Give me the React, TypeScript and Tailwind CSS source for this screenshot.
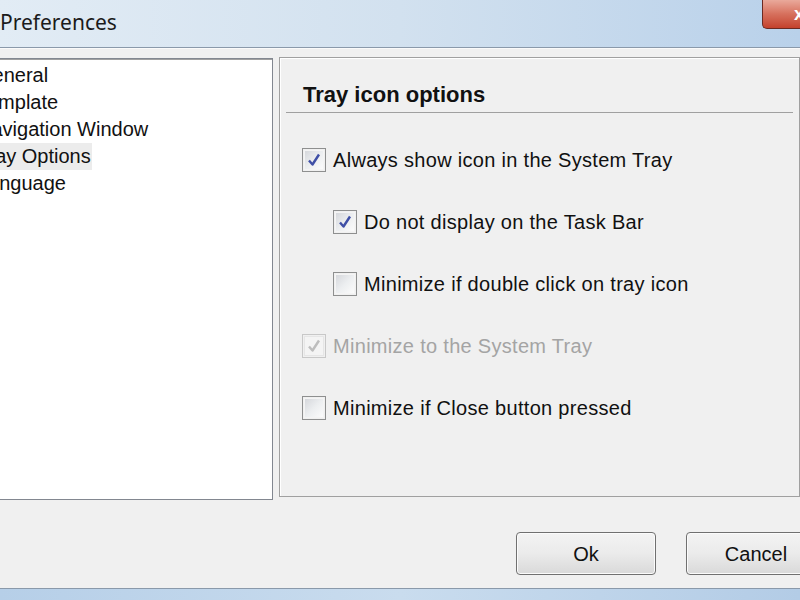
import type { ReactNode } from 'react';

const ui = { fontFamily: '"Liberation Sans", Arial, sans-serif' };

function Check({ checked, disabled }: { checked?: boolean; disabled?: boolean }) {
  return (
    <div
      className={`w-[24px] h-[24px] shrink-0 border flex items-center justify-center ${
        disabled ? 'border-[#c8c8c8]' : 'border-[#8e8f8f]'
      }`}
    >
      <div
        className={`w-[20px] h-[20px] border flex items-center justify-center ${
          disabled
            ? 'border-[#e6e6e6] bg-[#f4f4f4]'
            : 'border-[#f4f4f4] bg-gradient-to-br from-[#d6d8dc] via-[#eceef0] to-[#fbfbfb]'
        }`}
      >
        {checked && (
          <svg width="16" height="16" viewBox="0 0 16 16">
            <path
              d="M3 8.5 L6.5 12.5 L13 2.5"
              fill="none"
              stroke={disabled ? '#bdbdbd' : '#3f4fa6'}
              strokeWidth="2.4"
              strokeLinejoin="round"
            />
          </svg>
        )}
      </div>
    </div>
  );
}

function Option({ children, checked, disabled }: { children: ReactNode; checked?: boolean; disabled?: boolean }) {
  return (
    <div className="flex items-center gap-[7px] h-[24px]">
      <Check checked={checked} disabled={disabled} />
      <span
        className={`text-[20px] leading-none tracking-[0.3px] whitespace-nowrap ${
          disabled ? 'text-[#a4a4a4]' : 'text-[#111]'
        }`}
      >
        {children}
      </span>
    </div>
  );
}

function Button({ children }: { children: ReactNode }) {
  return (
    <button className="w-[140px] h-[43px] shrink-0 rounded-[4px] border border-[#707070] bg-gradient-to-b from-[#f3f3f3] via-[#ebebeb] to-[#d9d9d9] shadow-[inset_0_0_0_1px_#fbfbfb] text-[20px] text-[#111]">
      {children}
    </button>
  );
}

export default function App() {
  const tree = ['General', 'Template', 'Navigation Window', 'Tray Options', 'Language'];

  return (
    <div className="w-[800px] h-[600px] overflow-hidden flex flex-col bg-[#f0f0f0]" style={ui}>
      {/* title bar */}
      <div className="h-[48px] shrink-0 flex items-start justify-between border-b border-[#8a99aa] bg-gradient-to-r from-[#e2ecf5] via-[#d2e1ef] to-[#b9d1ea]">
        <div
          className="pl-[0px] pt-[7px] text-[21px] text-[#1b1b1b]"
          style={{ fontFamily: '"Noto Sans", "Open Sans", sans-serif' }}
        >
          Preferences
        </div>
        <div className="w-[38px] h-[29px] rounded-bl-[5px] border-l border-b border-[#6b2a22] bg-gradient-to-b from-[#e9a99b] via-[#d6705d] to-[#c4412c] flex items-center justify-end">
          <span className="text-white text-[18px] font-bold leading-none mr-[-4px]">x</span>
        </div>
      </div>

      <div className="flex-1 flex flex-col border-t border-[#fafafa]">
        {/* panels */}
        <div className="flex gap-[6px] pt-[9px] items-start">
          <div className="ml-[-2px] w-[275px] h-[442px] shrink-0 border border-[#828790] bg-white shadow-[inset_1px_1px_0_#a0a0a0] overflow-hidden">
            <div className="pt-[3px] ml-[-22px] flex flex-col items-start">
              {tree.map((t) => (
                <div
                  key={t}
                  className={`h-[27px] leading-[27px] text-[20px] text-[#111] whitespace-nowrap pr-[1px] ${
                    t === 'Tray Options' ? 'bg-[#ececec] mr-[-4px]' : ''
                  }`}
                >
                  {t}
                </div>
              ))}
            </div>
          </div>

          <div className="flex-1 h-[440px] border border-[#a0a0a0] shadow-[inset_1px_1px_0_#ffffff] bg-[#f0f0f0] mt-[-1px]">
            <div className="mx-[6px] h-[55px] border-b border-[#a0a0a0] flex items-center pl-[17px] pt-[18px]">
              <span className="text-[22px] font-bold text-[#111]">Tray icon options</span>
            </div>
            <div className="pt-[35px] pl-[22px] flex flex-col gap-[38px]">
              <Option checked>Always show icon in the System Tray</Option>
              <div className="pl-[31px]">
                <Option checked>Do not display on the Task Bar</Option>
              </div>
              <div className="pl-[31px]">
                <Option>Minimize if double click on tray icon</Option>
              </div>
              <Option checked disabled>
                Minimize to the System Tray
              </Option>
              <Option>Minimize if Close button pressed</Option>
            </div>
          </div>
        </div>

        {/* buttons */}
        <div className="flex gap-[30px] pl-[516px] pt-[32px]">
          <Button>Ok</Button>
          <Button>Cancel</Button>
        </div>
      </div>

      {/* bottom frame */}
      <div className="h-[12px] shrink-0 border-t border-[#8a99aa] bg-gradient-to-r from-[#b6cfe8] via-[#c9dcee] to-[#b3cce6]" />
    </div>
  );
}
